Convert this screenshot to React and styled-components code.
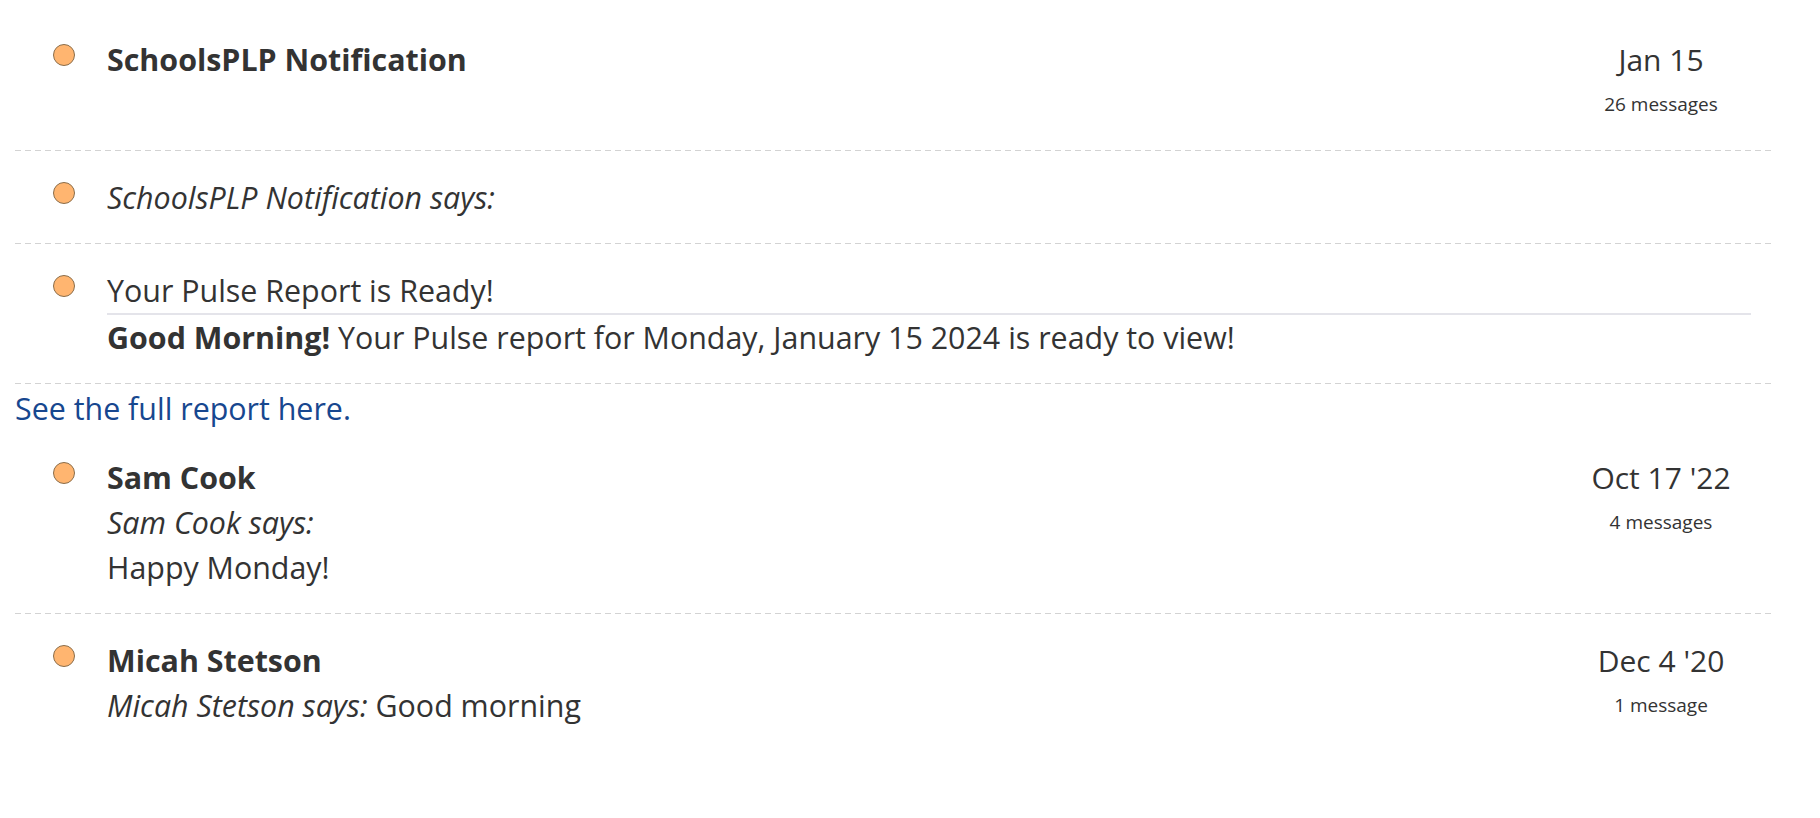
import React from "react";
import styled, { createGlobalStyle } from "styled-components";

const GlobalStyle = createGlobalStyle`
  html, body {
    margin: 0;
    padding: 0;
    background: #ffffff;
  }
  body {
    font-family: "Open Sans", "Noto Sans", sans-serif;
    color: #333333;
  }
`;

const threads = [
  {
    id: 1,
    kind: "title",
    text: "SchoolsPLP Notification",
    date: "Jan 15",
    count: "26 messages",
  },
  { id: 2, kind: "says", text: "SchoolsPLP Notification says:" },
  {
    id: 3,
    kind: "report",
    subject: "Your Pulse Report is Ready!",
    lead: "Good Morning!",
    body: " Your Pulse report for Monday, January 15 2024 is ready to view!",
  },
];

const List = styled.div`
  padding: 13px 46px 0 15px;
`;

const Row = styled.div`
  display: flex;
  align-items: flex-start;
  padding: 24px 23px 24px 0;
  background-image: ${({ $last }) =>
    $last
      ? "none"
      : "repeating-linear-gradient(to right, #d3d3d3 0 6px, transparent 6px 10px)"};
  background-size: 100% 1px;
  background-repeat: no-repeat;
  background-position: left bottom;
`;

const Dot = styled.span`
  flex: none;
  width: 20px;
  height: 20px;
  margin: 7px 32px 0 38px;
  border-radius: 50%;
  background: #ffb570;
  border: 1px solid #8a6d4a;
`;

const Content = styled.div`
  flex: 1;
  min-width: 0;
  font-size: 30.4px;
  line-height: 45px;
`;

const Title = styled.div`
  font-weight: 700;
`;

const Says = styled.div`
  font-style: italic;
`;

const Subject = styled.div`
  border-bottom: 2px solid #e4e4ea;
`;

const Line = styled.div``;

const Lead = styled.strong`
  font-weight: 700;
`;

const Meta = styled.div`
  flex: none;
  width: 180px;
  text-align: center;
`;

const DateText = styled.div`
  font-size: 30px;
  line-height: 45px;
`;

const Count = styled.div`
  font-size: 19px;
  line-height: 45px;
`;

const Link = styled.a`
  display: block;
  color: #17478f;
  font-size: 30.4px;
  line-height: 45px;
  text-decoration: none;
  padding-top: 2px;
`;

const Thread = ({ name, says, text, date, count }) => (
  <Row>
    <Dot />
    <Content>
      <Title>{name}</Title>
      <Says>{says}</Says>
      <Line>{text}</Line>
    </Content>
    <Meta>
      <DateText>{date}</DateText>
      <Count>{count}</Count>
    </Meta>
  </Row>
);

const App = () => {
  return (
    <>
      <GlobalStyle />
      <List>
        {threads.map((t) => (
          <Row key={t.id}>
            <Dot />
            <Content>
              {t.kind === "title" && <Title>{t.text}</Title>}
              {t.kind === "says" && <Says>{t.text}</Says>}
              {t.kind === "report" && (
                <>
                  <Subject>{t.subject}</Subject>
                  <Line>
                    <Lead>{t.lead}</Lead>
                    {t.body}
                  </Line>
                </>
              )}
            </Content>
            {t.date && (
              <Meta>
                <DateText>{t.date}</DateText>
                <Count>{t.count}</Count>
              </Meta>
            )}
          </Row>
        ))}
        <Link href="#">See the full report here.</Link>
        <Thread
          name="Sam Cook"
          says="Sam Cook says:"
          text="Happy Monday!"
          date="Oct 17 '22"
          count="4 messages"
        />
        <Row $last>
          <Dot />
          <Content>
            <Title>Micah Stetson</Title>
            <Line>
              <Says as="em">Micah Stetson says:</Says> Good morning
            </Line>
          </Content>
          <Meta>
            <DateText>Dec 4 '20</DateText>
            <Count>1 message</Count>
          </Meta>
        </Row>
      </List>
    </>
  );
};

export default App;
